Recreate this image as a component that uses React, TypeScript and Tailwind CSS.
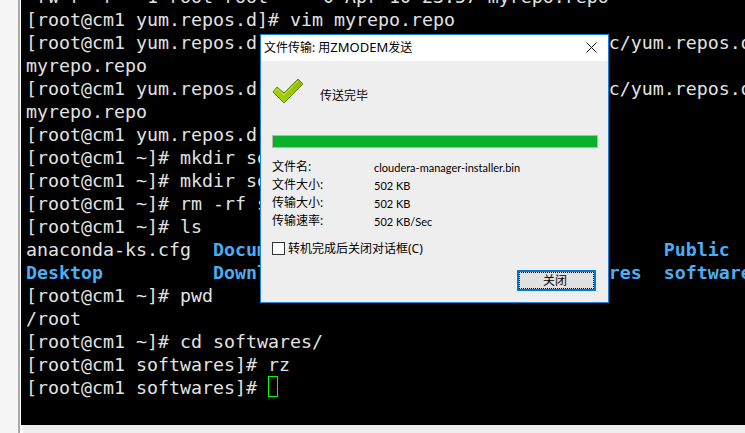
import React from 'react';

const MONO = { fontVariantLigatures: 'none' } as React.CSSProperties;

function Blue({ children }: { children: React.ReactNode }) {
  return <span className="font-bold text-[#4aaef5]">{children}</span>;
}

const lines: React.ReactNode[] = [
  '-rw-r--r-- 1 root root     0 Apr 10 23:57 myrepo.repo',
  '[root@cm1 yum.repos.d]# vim myrepo.repo',
  '[root@cm1 yum.repos.d]# scp myrepo.repo root@cm02:/etc/yum.repos.d',
  'myrepo.repo',
  '[root@cm1 yum.repos.d]# scp myrepo.repo root@cm03:/etc/yum.repos.d',
  'myrepo.repo',
  '[root@cm1 yum.repos.d]# cd',
  '[root@cm1 ~]# mkdir softwares',
  '[root@cm1 ~]# mkdir softwares',
  '[root@cm1 ~]# rm -rf softwares',
  '[root@cm1 ~]# ls',
  <>
    anaconda-ks.cfg  <Blue>Documents</Blue>
    {'                                '}
    <Blue>Public</Blue>
  </>,
  <>
    <Blue>Desktop</Blue>
    {'          '}
    <Blue>Downloads</Blue>
    {'                      '}
    <Blue>Pictures</Blue>
    {'  '}
    <Blue>softwares</Blue>
  </>,
  '[root@cm1 ~]# pwd',
  '/root',
  '[root@cm1 ~]# cd softwares/',
  '[root@cm1 softwares]# rz',
  <>
    [root@cm1 softwares]#{' '}
    <span className="inline-block h-[21px] w-[10px] border border-[#00ff00] align-top" />
  </>,
];

function CheckIcon() {
  return (
    <svg width="32" height="28" viewBox="0 0 32 28" className="shrink-0">
      <defs>
        <linearGradient id="chk" x1="0" y1="1" x2="1" y2="0">
          <stop offset="0" stopColor="#a6d800" />
          <stop offset="1" stopColor="#98b400" />
        </linearGradient>
      </defs>
      <path d="M1 14 L5 9 L12 15 L26 1 L31 6 L12 25 Z" fill="url(#chk)" stroke="#5f8a10" strokeWidth="1" strokeLinejoin="round" />
      <path d="M3 14 L5 11 L12 17 L26 3" fill="none" stroke="#c6e040" strokeWidth="1" />
    </svg>
  );
}

function InfoRow({ label, value }: { label: string; value: string }) {
  return (
    <div className="flex h-[18px] items-center">
      <span className="w-[102px]">{label}</span>
      <span className="text-[11px] [font-family:Lato,sans-serif]">{value}</span>
    </div>
  );
}

function TransferDialog() {
  return (
    <div className="absolute left-[260px] top-[34px] flex h-[269px] w-[349px] flex-col border border-[#1883d7] bg-[#eeeeee] text-[12px] leading-none text-black [font-family:'Noto_Sans','Noto_Sans_CJK_SC',sans-serif]">
      <div className="flex h-[26px] items-center justify-between bg-white pb-[1px] pl-[3px] pr-[11px]">
        <span>
          文件传输: 用<span className="text-[13px]">ZMODEM</span>发送
        </span>
        <svg width="11" height="11" viewBox="0 0 11 11">
          <path d="M0.5 0.5 L10.5 10.5 M10.5 0.5 L0.5 10.5" stroke="#111" strokeWidth="1" fill="none" />
        </svg>
      </div>
      <div className="flex flex-col px-[11px]">
        <div className="mt-[17px] flex items-center">
          <CheckIcon />
          <span className="ml-[16px] mt-[8px]">传送完毕</span>
        </div>
        <div className="mt-[29px] h-[13px] w-[326px] border border-[#b5b5b5] bg-[#09b02a]" />
        <div className="mt-[10px] flex flex-col">
          <InfoRow label="文件名:" value="cloudera-manager-installer.bin" />
          <InfoRow label="文件大小:" value="502 KB" />
          <InfoRow label="传输大小:" value="502 KB" />
          <InfoRow label="传输速率:" value="502 KB/Sec" />
        </div>
        <div className="mt-[12px] flex items-center">
          <span className="h-[13px] w-[13px] border border-[#333] bg-white" />
          <span className="ml-[3px]">转机完成后关闭对话框(C)</span>
        </div>
        <div className="mt-[15px] flex justify-end pr-[1px]">
          <button
            type="button"
            className="flex h-[21px] w-[79px] items-center justify-center border-2 border-[#0078d7] bg-[#e1e1e1] pr-[3px] outline-1 -outline-offset-3 outline-dotted outline-black"
          >
            关闭
          </button>
        </div>
      </div>
    </div>
  );
}

export default function App() {
  return (
    <div className="relative flex h-[433px] w-[745px] overflow-hidden bg-[#f0f0f0]">
      <div className="h-full w-[21px] shrink-0 border-r border-white bg-[#f5f5f5]">
        <div className="ml-[18px] h-full w-[2px] bg-[#a9a9a9]" />
      </div>
      <div className="flex min-w-0 flex-1 flex-col">
        <div
          style={MONO}
          className="h-[425px] overflow-hidden bg-black pl-[5px] text-[18.27px] leading-[23px] whitespace-pre text-[#e2e2e2] [font-family:'DejaVu_Sans_Mono',monospace]"
        >
          <div className="-mt-[15px]">
            {lines.map((line, i) => (
              <div key={i} className="h-[23px]">
                {line}
              </div>
            ))}
          </div>
        </div>
        <div className="flex-1 border-l-2 border-white bg-[#eeeeee]" />
      </div>
      <TransferDialog />
    </div>
  );
}
